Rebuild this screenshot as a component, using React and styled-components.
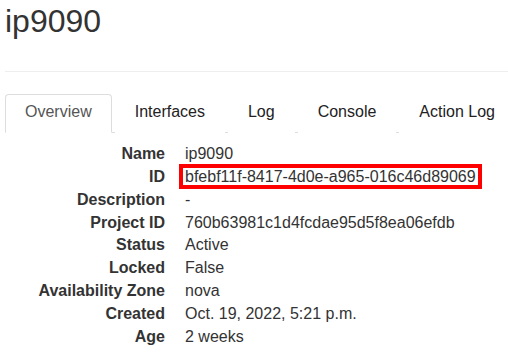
import styled, { createGlobalStyle } from "styled-components";

const GlobalStyle = createGlobalStyle`
    html, body {
        margin: 0;
        padding: 0;
        background: #ffffff;
    }
    body {
        font-family: "Liberation Sans", Arial, sans-serif;
        font-size: 16px;
        line-height: 1.42857;
        color: #333333;
    }
`

const tabs = ["Overview", "Interfaces", "Log", "Console", "Action Log"];

const details = [
    ["Name", "ip9090"],
    ["ID", "bfebf11f-8417-4d0e-a965-016c46d89069", true],
    ["Description", "-"],
    ["Project ID", "760b63981c1d4fcdae95d5f8ea06efdb"],
    ["Status", "Active"],
    ["Locked", "False"],
    ["Availability Zone", "nova"],
    ["Created", "Oct. 19, 2022, 5:21 p.m."],
    ["Age", "2 weeks"],
];

export default function App(){
    return(
        <Page>
            <GlobalStyle/>
            <Title>ip9090</Title>
            <Divider/>
            <TabList>
                {tabs.map((tab, i) =>
                    <Tab key={tab} active={i === 0}>{tab}</Tab>
                )}
            </TabList>
            <DetailList>
                {details.map(([label, value, marked]) =>
                    <DetailRow key={label}>
                        <Label>{label}</Label>
                        <Value>
                            {marked ? <Marked>{value}</Marked> : value}
                        </Value>
                    </DetailRow>
                )}
            </DetailList>
        </Page>
    )
}

const Page = styled.div`
    padding-left: 5px;
    overflow: hidden;
`
const Title = styled.h1`
    margin: 4px 0 0;
    font-size: 32px;
    font-weight: 400;
    line-height: 1.1;
    color: #333333;
`
const Divider = styled.hr`
    margin: 32px 0 0;
    border: 0;
    border-top: 1px solid #eeeeee;
`
const TabList = styled.ul`
    display: flex;
    margin: 22px 0 0;
    padding: 0;
    list-style: none;
    border-bottom: 1px solid #dddddd;
`
const Tab = styled.li`
    margin-right: 3px;
    margin-bottom: -1px;
    padding: 6px 19px 8px;
    border: 1px solid ${props => props.active ? "#dddddd" : "transparent"};
    border-bottom-color: ${props => props.active ? "#ffffff" : "transparent"};
    border-radius: 4px 4px 0 0;
    background: #ffffff;
    color: ${props => props.active ? "#555555" : "#222222"};
    white-space: nowrap;
`
const DetailList = styled.dl`
    margin: 10px 0 0;
`
const DetailRow = styled.div`
    display: flex;
`
const Label = styled.dt`
    width: 160px;
    flex-shrink: 0;
    text-align: right;
    font-weight: 700;
`
const Value = styled.dd`
    margin: 0 0 0 20px;
    white-space: nowrap;
`
const Marked = styled.span`
    margin-left: -2px;
    padding: 0 2px;
    outline: 4px solid #ff0000;
`
